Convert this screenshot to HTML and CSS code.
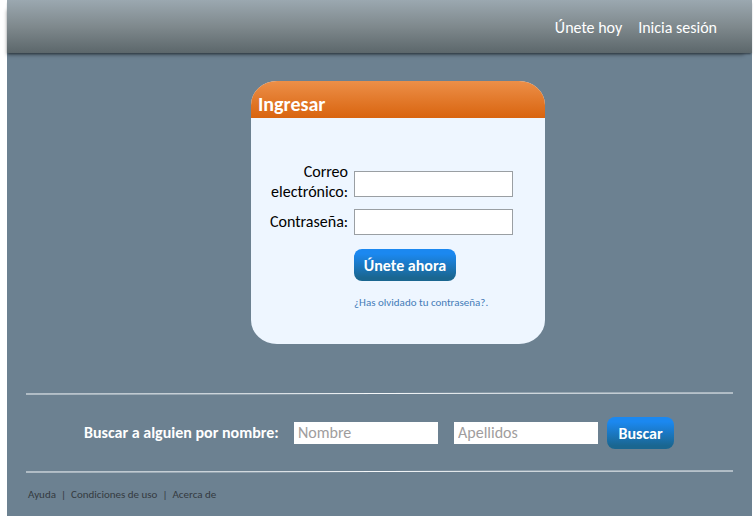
FILE: index.html
```html
<!DOCTYPE html>
<html lang="es">
<head>
<meta charset="utf-8">
<meta name="viewport" content="width=device-width, initial-scale=1">
<title>Ingresar</title>
<link rel="stylesheet" href="styles.css">
</head>
<body>
<div class="page">
  <header class="topbar">
    <nav class="topnav">
      <a href="#">Únete hoy</a>
      <a href="#">Inicia sesión</a>
    </nav>
  </header>
  <main class="main">
    <section class="card">
      <h1 class="card-title">Ingresar</h1>
      <form class="login">
        <label for="email">Correo electrónico:</label>
        <input id="email" type="email">
        <label for="password">Contraseña:</label>
        <input id="password" type="password">
        <button class="button" type="button">Únete ahora</button>
        <a class="forgot" href="#">¿Has olvidado tu contraseña?.</a>
      </form>
    </section>
  </main>
  <div class="lower">
    <svg class="rule" viewBox="0 0 706 3" preserveAspectRatio="none" aria-hidden="true"><path d="M0 2L706 1"/></svg>
    <form class="search">
      <label for="first">Buscar a alguien por nombre:</label>
      <input id="first" type="text" placeholder="Nombre">
      <input id="last" type="text" placeholder="Apellidos" aria-label="Apellidos">
      <button class="button" type="button">Buscar</button>
    </form>
    <svg class="rule" viewBox="0 0 706 3" preserveAspectRatio="none" aria-hidden="true"><path d="M0 2L706 1"/></svg>
    <footer class="footer">
      <a href="#">Ayuda</a><span>|</span><a href="#">Condiciones de uso</a><span>|</span><a href="#">Acerca de</a>
    </footer>
  </div>
</div>
</body>
</html>
```
FILE: styles.css
```css
* { box-sizing: border-box; }

body {
  margin: 0;
  padding: 0 2px 0 7px;
  background: #fff;
  font-family: Calibri, Carlito, "Open Sans", sans-serif;
  font-size: 16px;
  line-height: 20px;
}

a { color: inherit; text-decoration: none; }

input, button { font: inherit; }

.page {
  display: flex;
  flex-direction: column;
  min-height: 100vh;
  background: #6c8191;
}

.topbar {
  height: 53px;
  padding: 18px 35px 0 0;
  background: linear-gradient(#9ba8b0, #7f898d 50%, #5c676b);
  box-shadow: 0 2px 2px -1px #2f3b44, -4px 6px 4px -4px #0005;
}

.topnav {
  display: flex;
  justify-content: flex-end;
  gap: 16px;
  color: #fff;
}

.main {
  display: flex;
  justify-content: center;
  padding: 28px 0 48px 37px;
}

.card {
  width: 294px;
  border-radius: 26px / 24px;
  overflow: hidden;
  background: #eef6ff;
}

.card-title {
  margin: 0;
  padding: 12px 7px 0;
  height: 37px;
  background: linear-gradient(#ec8f48, #d9640f);
  color: #fff;
  font-size: 20px;
  line-height: 22px;
}

.login {
  display: grid;
  grid-template-columns: 78px 159px;
  column-gap: 6px;
  padding: 43px 0 31px 19px;
  align-items: center;
}

.login label { text-align: right; }

.login input {
  width: 100%;
  height: 26px;
  margin: 6px 0;
  padding: 0 4px;
  border: 1px solid #9a9fa3;
  background: #fff;
}

#email { margin: 10px 0 6px; }

.button {
  height: 32px;
  padding: 2px 0 0;
  border: 0;
  border-radius: 8px;
  background: linear-gradient(#1b88f0 15%, #1a6690 90%);
  color: #fff;
  font-weight: 700;
}

.login .button {
  grid-column: 2;
  width: 102px;
  margin-top: 8px;
}

.forgot {
  grid-column: 2;
  margin-top: 12px;
  color: #447cb8;
  font-size: 11px;
}

.lower { padding: 0 19px; }

.rule {
  display: block;
  width: 100%;
  height: 3px;
}

.rule path {
  fill: none;
  stroke: #f4f7f9;
  stroke-width: 1;
}

.search {
  display: flex;
  align-items: center;
  height: 75px;
  padding-left: 58px;
}

.search label {
  width: 210px;
  color: #fff;
  font-weight: 700;
}

.search input {
  width: 144px;
  height: 22px;
  margin-right: 16px;
  padding: 0 4px;
  border: 0;
  background: #fff;
}

.search #last { margin-right: 9px; }

.search input::placeholder { color: #a09d9d; opacity: 1; }

.search .button { width: 67px; }

.footer {
  display: flex;
  gap: 5px;
  padding: 12px 2px 10px;
  color: #343a3f;
  font-size: 11px;
}
```
